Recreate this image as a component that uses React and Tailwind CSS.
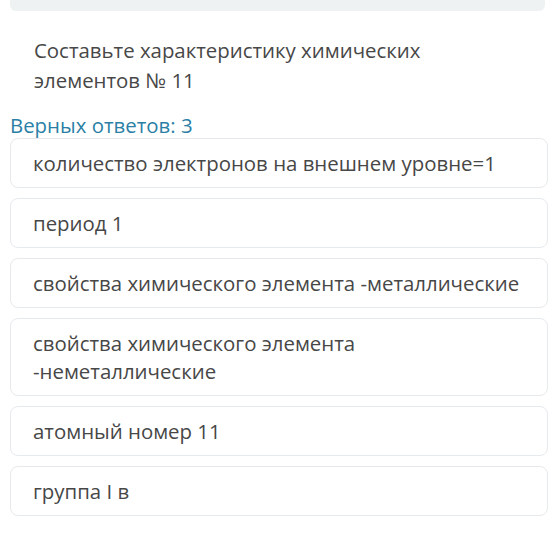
import React from 'react';

const answers = [
  'количество электронов на внешнем уровне=1',
  'период 1',
  'свойства химического элемента -металлические',
  'свойства химического элемента -неметаллические',
  'атомный номер 11',
  'группа I в',
];

const App = () => {
  return (
    <div className="min-h-screen bg-white font-['Open_Sans',sans-serif] text-[20.4px] text-[#474747]">
      <div className="ml-[10px] mr-[4px] h-[11px] rounded-b-md bg-[#eff2f3]" />

      <div className="pl-[10px] pr-[1px]">
        <p className="pl-[24px] pr-[80px] pt-[24px] leading-[30px]">
          Составьте характеристику химических элементов № 11
        </p>

        <p className="mt-[17px] leading-[26px] text-[#2b7fa6]">Верных ответов: 3</p>

        <div className="flex flex-col gap-[10px]">
          {answers.map((a) => (
            <div
              key={a}
              className="rounded-lg border border-[#e6eaec] bg-white px-[22px] py-[10px] leading-[28px]"
            >
              {a}
            </div>
          ))}
        </div>
      </div>
    </div>
  );
};

export default App;
